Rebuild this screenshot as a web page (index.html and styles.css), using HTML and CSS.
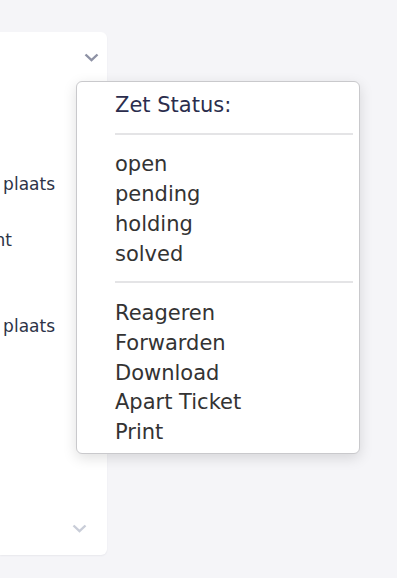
FILE: index.html
```html
<!DOCTYPE html>
<html>
<head>
    <meta charset="utf-8">
    <title>Ticket acties</title>
    <link rel="stylesheet" href="styles.css">
</head>
<body>
<div class="board">
    <div class="ticket-card">
        <div class="card-head">
            <svg class="chevron" width="15" height="9" viewBox="0 0 15 9"><path d="M1.5 1.5 L7.5 7.2 L13.5 1.5" fill="none" stroke="currentColor" stroke-width="2.4"/></svg>
        </div>
        <div class="card-line line-one"><span>Afleveradres op andere plaats</span></div>
        <div class="card-line line-two"><span>Levering op afspraak met klant</span></div>
        <div class="card-line line-three"><span>Ophalen op een andere plaats</span></div>
        <div class="card-foot">
            <svg class="chevron chevron-light" width="15" height="9" viewBox="0 0 15 9"><path d="M1.5 1.5 L7.5 7.2 L13.5 1.5" fill="none" stroke="currentColor" stroke-width="2.4"/></svg>
        </div>
    </div>
</div>

<div class="action-menu">
    <div class="menu-title">Zet Status:</div>
    <hr class="menu-divider">
    <ul class="menu-list">
        <li>open</li>
        <li>pending</li>
        <li>holding</li>
        <li>solved</li>
    </ul>
    <hr class="menu-divider menu-divider-low">
    <ul class="menu-list menu-actions">
        <li>Reageren</li>
        <li>Forwarden</li>
        <li>Download</li>
        <li>Apart Ticket</li>
        <li>Print</li>
    </ul>
</div>
</body>
</html>
```

FILE: styles.css
```css
body {
    margin: 0;
    height: 578px;
    overflow: hidden;
    background: #f5f5f8;
    font-family: "DejaVu Sans", Verdana, sans-serif;
}

.board {
    display: flex;
    padding-top: 32px;
}

.ticket-card {
    display: flex;
    flex-direction: column;
    width: 107px;
    height: 523px;
    box-sizing: border-box;
    background: #fff;
    border-radius: 0 6px 6px 0;
    box-shadow: 0 1px 2px rgba(30, 40, 70, 0.06);
    overflow: hidden;
}

.card-head {
    display: flex;
    justify-content: flex-end;
    height: 50px;
    box-sizing: border-box;
    padding: 21px 8px 0 0;
}

.chevron {
    color: #8e92a5;
}

.chevron-light {
    color: #c9cdd8;
}

.card-line {
    display: flex;
    justify-content: flex-end;
    font-size: 17px;
    line-height: 24px;
    color: #2d3347;
    white-space: nowrap;
}

.line-one {
    margin-top: 90px;
    padding-right: 52px;
}

.line-two {
    margin-top: 32px;
    padding-right: 95px;
}

.line-three {
    margin-top: 62px;
    padding-right: 52px;
}

.card-foot {
    display: flex;
    justify-content: flex-end;
    margin-top: auto;
    padding: 0 20px 22px 0;
}

.action-menu {
    position: absolute;
    top: 81px;
    left: 76px;
    width: 284px;
    height: 373px;
    box-sizing: border-box;
    padding: 8px 6px 0 38px;
    background: #fff;
    border: 1px solid #c9c9cc;
    border-radius: 6px;
    box-shadow: 0 4px 14px rgba(0, 0, 0, 0.13);
    font-size: 21px;
    line-height: 30px;
}

.menu-title {
    color: #2b2d4d;
    padding-bottom: 1px;
}

.menu-divider {
    border: 0;
    height: 2px;
    background: #e4e4e6;
    margin: 12px 0 14px 0;
}

.menu-divider-low {
    margin-bottom: 16px;
}

.menu-list {
    list-style: none;
    margin: 0;
    padding: 0;
    color: #333;
}

.menu-actions {
    line-height: 29.75px;
}
```
